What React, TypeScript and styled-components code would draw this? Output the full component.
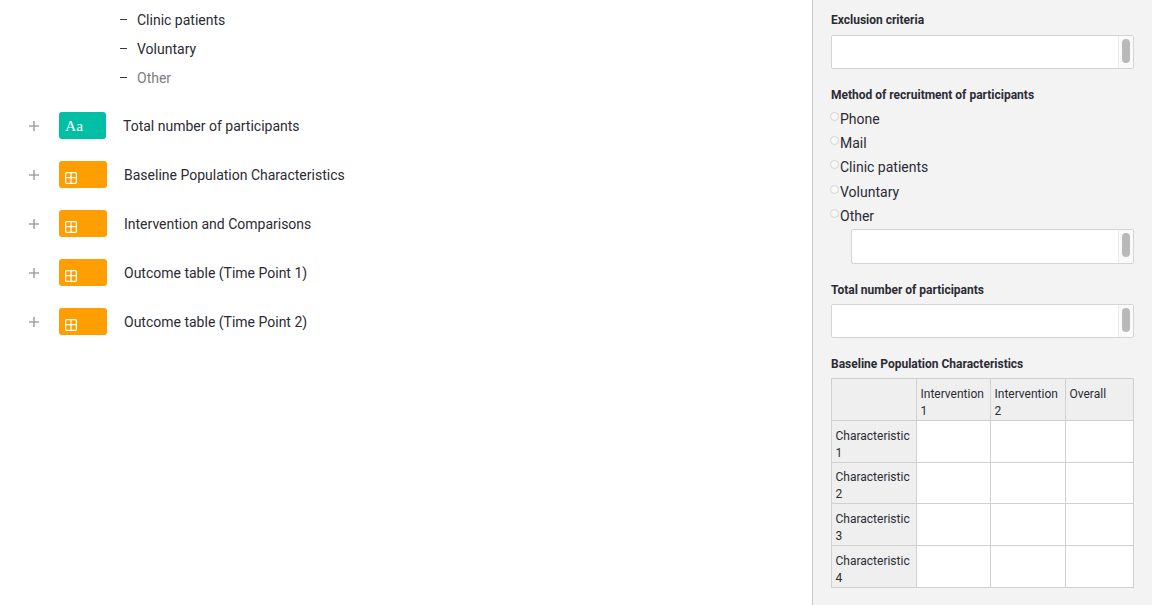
import styled, {createGlobalStyle} from 'styled-components'

const listItems = [
    {label: 'Clinic patients', muted: false},
    {label: 'Voluntary', muted: false},
    {label: 'Other', muted: true},
]

const questions = [
    {label: 'Total number of participants', kind: 'text'},
    {label: 'Baseline Population Characteristics', kind: 'table'},
    {label: 'Intervention and Comparisons', kind: 'table'},
    {label: 'Outcome table (Time Point 1)', kind: 'table'},
    {label: 'Outcome table (Time Point 2)', kind: 'table'},
]

const recruitment = ['Phone', 'Mail', 'Clinic patients', 'Voluntary', 'Other']
const columns = ['Intervention 1', 'Intervention 2', 'Overall']
const characteristics = ['Characteristic 1', 'Characteristic 2', 'Characteristic 3', 'Characteristic 4']

const TableIcon = () => (
    <svg width="12" height="12" viewBox="0 0 12 12" fill="none" stroke="#fff" strokeWidth="1.25">
        <rect x="0.6" y="0.6" width="10.8" height="10.8" rx="1.2" />
        <path d="M0.6 5.6H11.4M6 0.6V11.4" />
    </svg>
)

const TextBox = ({indent}: {indent?: boolean}) => (
    <Box $indent={indent}>
        <Gutter>
            <Thumb />
        </Gutter>
    </Box>
)

const App = () => {
    return (
        <Page>
            <GlobalStyle />
            <Main>
                <SubList>
                    {listItems.map(item => (
                        <SubItem key={item.label} $muted={item.muted}>
                            <Dash />
                            {item.label}
                        </SubItem>
                    ))}
                </SubList>
                {questions.map(q => (
                    <QuestionRow key={q.label}>
                        <Plus>
                            <svg width="10" height="10" viewBox="0 0 10 10" stroke="#a3a3a3" strokeWidth="1.6">
                                <path d="M0 5H10M5 0V10" />
                            </svg>
                        </Plus>
                        <Badge $kind={q.kind}>{q.kind === 'text' ? 'Aa' : <TableIcon />}</Badge>
                        <QuestionLabel>{q.label}</QuestionLabel>
                    </QuestionRow>
                ))}
            </Main>
            <Sidebar>
                <Label>Exclusion criteria</Label>
                <TextBox />
                <MethodLabel>Method of recruitment of participants</MethodLabel>
                <Options>
                    {recruitment.map(option => (
                        <Option key={option}>
                            <Radio />
                            {option}
                        </Option>
                    ))}
                </Options>
                <TextBox indent />
                <SectionLabel>Total number of participants</SectionLabel>
                <TextBox />
                <SectionLabel>Baseline Population Characteristics</SectionLabel>
                <Grid>
                    <colgroup>
                        <col style={{width: 85}} />
                        <col style={{width: 74}} />
                        <col style={{width: 75}} />
                        <col />
                    </colgroup>
                    <thead>
                        <HeadRow>
                            <HeadCell />
                            {columns.map(column => (
                                <HeadCell key={column}>{column}</HeadCell>
                            ))}
                        </HeadRow>
                    </thead>
                    <tbody>
                        {characteristics.map(name => (
                            <BodyRow key={name}>
                                <HeadCell>{name}</HeadCell>
                                {columns.map(column => (
                                    <Cell key={column} />
                                ))}
                            </BodyRow>
                        ))}
                    </tbody>
                </Grid>
            </Sidebar>
        </Page>
    )
}

export default App

const GlobalStyle = createGlobalStyle`
    html, body {
        margin: 0;
        height: 100%;
        overflow: hidden;
        background: #fff;
        font-family: Roboto, "Liberation Sans", sans-serif;
        color: #2b2b33;
    }
`

const Page = styled.div`
    display: flex;
    width: 1152px;
    height: 605px;
    overflow: hidden;
`

const Main = styled.div`
    flex: 1;
    min-width: 0;
    padding-top: 5px;
`

const SubList = styled.div`
    display: flex;
    flex-direction: column;
    padding-left: 120px;
    margin-bottom: 20px;
`

const SubItem = styled.div<{$muted: boolean}>`
    display: flex;
    align-items: center;
    height: 29px;
    font-size: 14px;
    color: ${p => (p.$muted ? '#7d7d7d' : '#2b2b33')};
`

const Dash = styled.span`
    width: 7px;
    height: 1px;
    margin-right: 10px;
    background: #3a3a3a;
`

const QuestionRow = styled.div`
    display: flex;
    align-items: center;
    height: 27px;
    margin-bottom: 22px;
    padding-left: 29px;
`

const Plus = styled.span`
    display: flex;
    width: 10px;
    margin-right: 20px;
`

const Badge = styled.span<{$kind: string}>`
    display: flex;
    align-items: ${p => (p.$kind === 'text' ? 'center' : 'flex-end')};
    width: ${p => (p.$kind === 'text' ? '47px' : '48px')};
    height: 27px;
    box-sizing: border-box;
    padding: ${p => (p.$kind === 'text' ? '0 0 0 6px' : '0 0 4px 6px')};
    border-radius: 3px;
    background: ${p => (p.$kind === 'text' ? '#00bfa5' : '#ff9e00')};
    color: #fff;
    font-family: "Liberation Serif", serif;
    font-size: 15.5px;
`

const QuestionLabel = styled.span`
    margin-left: 17px;
    font-size: 14px;
`

const Sidebar = styled.aside`
    width: 340px;
    flex: none;
    box-sizing: border-box;
    padding: 13px 18px 0;
    border-left: 1px solid #c9c9c9;
    background: #f3f3f3;
`

const Label = styled.div`
    height: 14px;
    margin-bottom: 8px;
    font-size: 12px;
    line-height: 14px;
    font-weight: 700;
`

const SectionLabel = styled(Label)`
    margin-top: 19px;
    margin-bottom: 7px;
`

const MethodLabel = styled(Label)`
    margin-top: 19px;
    margin-bottom: 5px;
`

const Box = styled.div<{$indent?: boolean}>`
    display: flex;
    justify-content: flex-end;
    height: ${p => (p.$indent ? '35px' : '34px')};
    box-sizing: border-box;
    margin-left: ${p => (p.$indent ? '20px' : '0')};
    border: 1px solid #d4d4d4;
    border-radius: 2px;
    background: #fff;
`

const Gutter = styled.div`
    display: flex;
    justify-content: center;
    width: 15px;
    padding-top: 3px;
    box-sizing: border-box;
    border-left: 1px solid #ececec;
    background: #fafafa;
`

const Thumb = styled.div`
    width: 8px;
    height: 24px;
    border-radius: 4px;
    background: #b9b9b9;
`

const Options = styled.div`
    display: flex;
    flex-direction: column;
    margin-bottom: 1.5px;
`

const Option = styled.div`
    display: flex;
    height: 24.2px;
    line-height: 24.2px;
    font-size: 14px;
`

const Radio = styled.span`
    width: 7px;
    height: 7px;
    flex: none;
    margin: 5px 1px 0 -1px;
    border: 1px solid #d6d6d6;
    border-radius: 50%;
    background: #f7f7f7;
`

const Grid = styled.table`
    width: 303px;
    table-layout: fixed;
    border-collapse: collapse;
    background: #fff;
    font-size: 12px;
    line-height: 17px;
`

const HeadRow = styled.tr`
    height: 42px;
`

const HeadCell = styled.td`
    box-sizing: border-box;
    padding: 7px 3.5px 0;
    vertical-align: top;
    border: 1px solid #d0d0d0;
    background: #efefef;
`

const BodyRow = styled.tr`
    height: 42px;

    &:nth-child(2) {
        height: 41px;
    }

    &:nth-child(2) ${HeadCell} {
        padding-top: 6px;
    }
`

const Cell = styled.td`
    border: 1px solid #d0d0d0;
    background: #fff;
`
